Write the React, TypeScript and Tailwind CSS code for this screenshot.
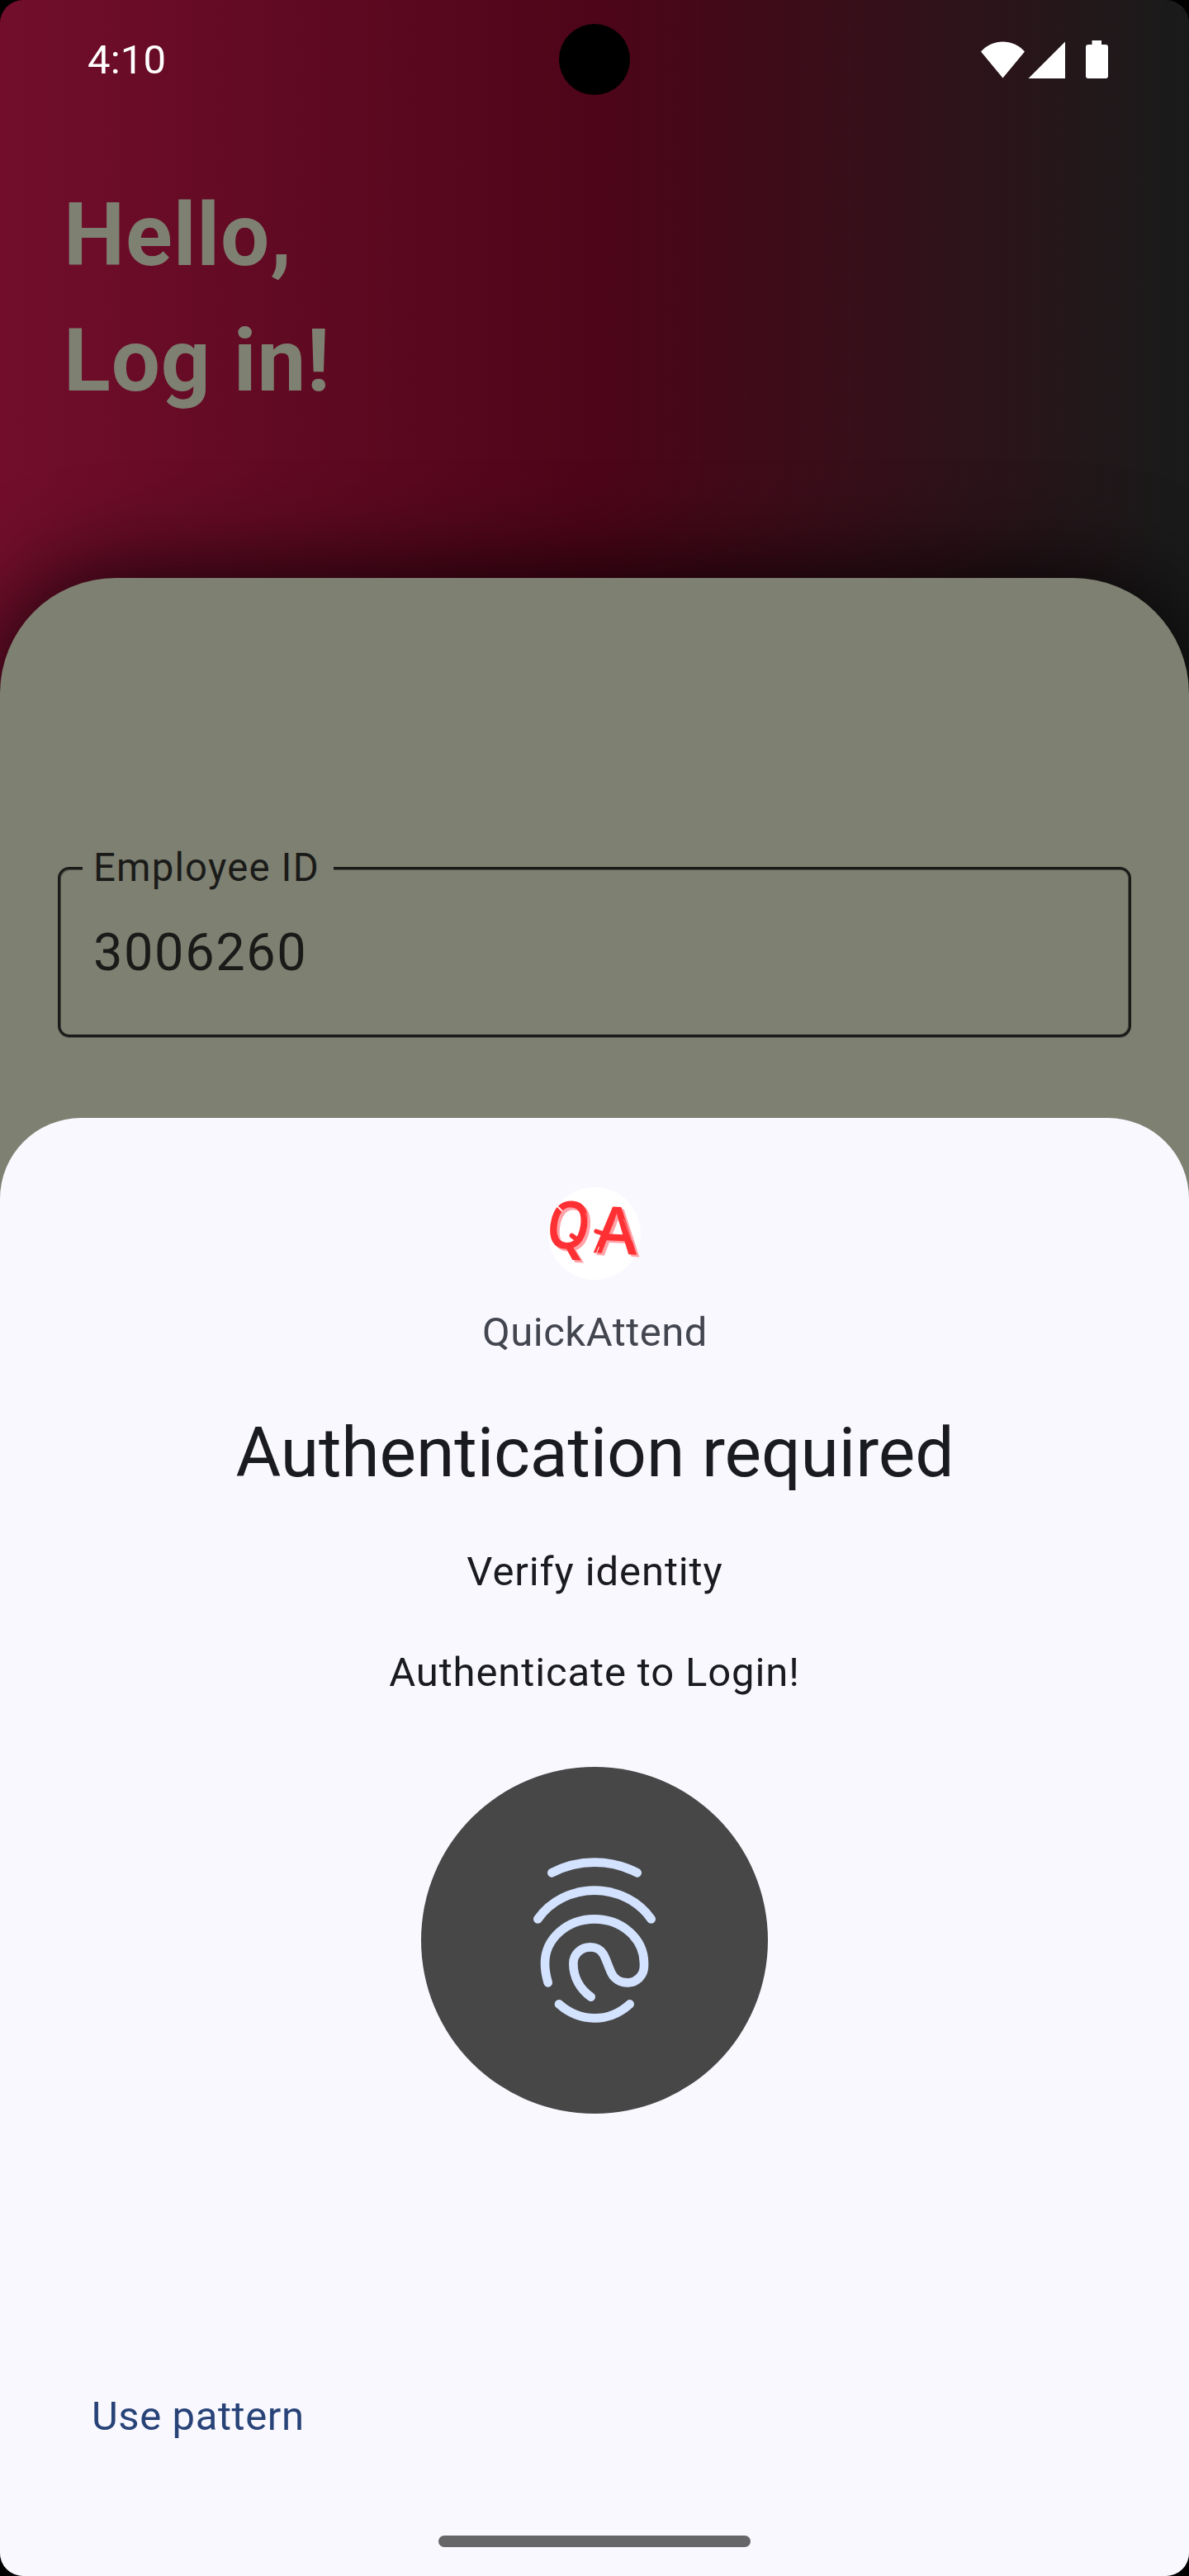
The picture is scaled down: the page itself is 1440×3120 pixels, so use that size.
function StatusBar() {
  return (
    <div className="absolute inset-x-0 top-0 flex h-[144px] items-center justify-between pr-[98px] pl-[106px] text-white">
      <span className="text-[49px] leading-[57px] tracking-[0.2px]">4:10</span>
      <div className="absolute top-[29px] left-[677px] size-[86px] rounded-full bg-black" />
      <svg className="h-[46px] w-[154px]" viewBox="0 0 154 46" fill="currentColor">
        <path d="M0 13.5 C14 -2.5 39 -2.5 53 13.5 L26.5 45.5 Z" />
        <path d="M102 1.5 V46 H57.5 Z" />
        <path d="M134.5 0 H146 V5 H151 Q154 5 154 8 V43 Q154 46 151 46 H130 Q127 46 127 43 V8 Q127 5 130 5 H134.5 Z" />
      </svg>
    </div>
  );
}

function EmployeeField() {
  return (
    <div className="relative flex h-[206px] items-start rounded-[14px] border-3 border-[#1a1b19] px-[40px] pt-[64px] text-[#1a1b19] shadow-[inset_1px_1px_0_0_#1a1b1980,inset_-1px_0_0_0_#1a1b1980,0_1px_0_0_#1a1b1980]">
      <label className="absolute -top-[30px] left-[27px] bg-[#7e8071] pr-[17px] pl-[13px] text-[47.25px] leading-[56px] tracking-[1.2px] whitespace-nowrap">
        Employee ID
      </label>
      <span className="text-[63px] leading-[74px] tracking-[1.65px]">3006260</span>
    </div>
  );
}

function AppLogo() {
  return (
    <div className="size-[112px] shrink-0 rounded-full bg-white">
      <svg
        className="size-[112px] overflow-visible font-['Open_Sans',sans-serif] font-semibold"
        viewBox="72 54 336 336"
        fontSize="238"
      >
        <g fill="#ffa3a8">
          <text transform="matrix(.84 .04 -.14 1 66 281)">Q</text>
          <text transform="matrix(1 .05 -.04 1 246 300)">A</text>
        </g>
        <g fill="#ff3033">
          <text transform="matrix(.84 .04 -.14 1 56 272)">Q</text>
          <text transform="matrix(1 .05 -.04 1 236 292)">A</text>
        </g>
        {/* dry-brush streaks */}
        <g fill="none" strokeLinecap="round">
          <path d="M246 214 L284 226" stroke="#ff3033" strokeWidth="16" />
          <path d="M158 230 L182 248" stroke="#ff3033" strokeWidth="18" />
          <path d="M106 124 L122 140" stroke="#fff" strokeWidth="5" />
          <path d="M208 148 Q222 176 212 214" stroke="#ffa3a8" strokeWidth="2" />
          <path d="M346 170 L376 248" stroke="#ffa3a8" strokeWidth="2" />
          <path d="M248 292 L256 272" stroke="#fff" strokeWidth="3" />
        </g>
      </svg>
    </div>
  );
}

function FingerprintBadge() {
  return (
    <div className="mt-[86px] size-[420px] shrink-0 rounded-full bg-[#474747]">
      <svg
        className="size-[420px]"
        viewBox="30 30 1260 1260"
        fill="none"
        stroke="#d3e2ff"
        strokeWidth="32"
        strokeLinecap="round"
      >
        <path d="M505 415 Q577 377 660 377 T815 415" />
        <path d="M454 583 C500 517 577 479 660 479 S820 517 866 583" />
        <path d="M491 814 C484 790 480 765 480 744 C480 655 560 583 660 583 S840 655 840 744 V754 C840 788 813 814 780 814 C754 814 731 800 721 778 C708 750 701 724 691 709 C681 693 663 685 645 685 C610 685 583 711 583 744 C583 795 608 838 647 866" />
        <path d="M531 892 Q588 943 660 943 T788 892" />
      </svg>
    </div>
  );
}

function BiometricSheet() {
  return (
    <section className="absolute inset-x-0 bottom-0 flex h-[1766px] flex-col items-center rounded-t-[98px] bg-[#f9f8ff] pt-[84px] text-[#1a1b21]">
      <AppLogo />
      <p className="mt-[35px] pl-px text-[49px] leading-[57px] tracking-[0.5px] text-[#44464f]">QuickAttend</p>
      <h2 className="mt-[69px] pl-px text-[84px] leading-[98px] tracking-[-0.1px]">Authentication required</h2>
      <p className="mt-[66px] pl-px text-[49px] leading-[57px] tracking-[0.9px]">Verify identity</p>
      <p className="mt-[65px] text-[49px] leading-[57px] tracking-[0.87px]">Authenticate to Login!</p>
      <FingerprintBadge />
      <button className="mt-[338px] ml-[111px] self-start text-[49px] leading-[57px] tracking-[0.6px] text-[#284377]">
        Use pattern
      </button>
      <div className="mt-[116px] h-[14px] w-[378px] rounded-full bg-[#666668]" />
    </section>
  );
}

export default function App() {
  return (
    <div className="h-[3120px] w-[1440px] bg-black font-[Roboto,sans-serif]">
      <main className="relative flex h-full flex-col overflow-hidden rounded-[28px] bg-linear-to-r/srgb from-[#720e2c] via-[#4e0519] to-[#191b1a]">
        <h1 className="h-[700px] shrink-0 pt-[210px] pl-[77px] text-[105px] leading-[151.5px] font-bold tracking-[0.9px] text-[#7e8071]">
          Hello,
          <br />
          Log in!
        </h1>
        <div className="grow rounded-t-[140px] bg-[#7e8071] px-[70px] pt-[350px] shadow-[0_0_120px_0_#000000e6]">
          <EmployeeField />
        </div>
        <StatusBar />
        <BiometricSheet />
      </main>
    </div>
  );
}
